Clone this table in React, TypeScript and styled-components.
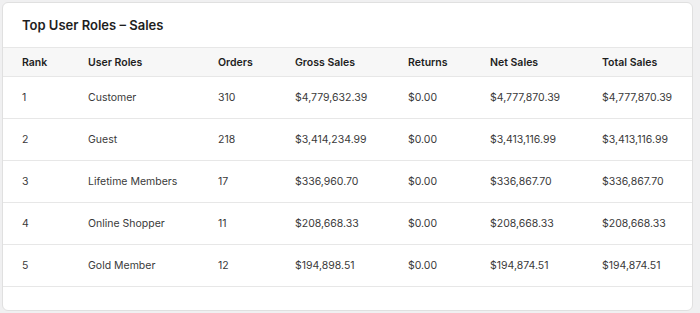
import { createGlobalStyle, styled } from "styled-components";

const GlobalStyle = createGlobalStyle`
  html, body {
    margin: 0;
    padding: 0;
    background: #f0f0f1;
  }
  body {
    font-family: Inter, "Liberation Sans", sans-serif;
    -webkit-font-smoothing: antialiased;
  }
`;

const Page = styled.div`
  padding: 2px 7px 2px 2px;
`;

const Card = styled.section`
  box-sizing: border-box;
  height: 309px;
  background: #fff;
  border: 1px solid #e0e0e0;
  border-radius: 6px;
  overflow: hidden;
`;

const Title = styled.h2`
  margin: 0;
  height: 44px;
  display: flex;
  align-items: center;
  padding-left: 19px;
  font-size: 13px;
  font-weight: 600;
  color: #1e1e1e;
`;

const Row = styled.div<{ $head?: boolean }>`
  display: grid;
  grid-template-columns: 66px 130px 77px 113px 82px 112px 1fr;
  padding-left: 19px;
  align-items: center;
  height: ${(p) => (p.$head ? "28px" : "41px")};
  background: ${(p) => (p.$head ? "#f7f7f7" : "#fff")};
  border-top: ${(p) => (p.$head ? "1px solid #e7e7e7" : "none")};
  border-bottom: 1px solid #e7e7e7;
  font-size: 10.5px;
  font-weight: ${(p) => (p.$head ? 600 : 400)};
  color: ${(p) => (p.$head ? "#1e1e1e" : "#3a3a3a")};
`;

const Cell = styled.div`
  white-space: nowrap;
`;

const columns = [
  "Rank",
  "User Roles",
  "Orders",
  "Gross Sales",
  "Returns",
  "Net Sales",
  "Total Sales",
];

const rows = [
  ["1", "Customer", "310", "$4,779,632.39", "$0.00", "$4,777,870.39", "$4,777,870.39"],
  ["2", "Guest", "218", "$3,414,234.99", "$0.00", "$3,413,116.99", "$3,413,116.99"],
  ["3", "Lifetime Members", "17", "$336,960.70", "$0.00", "$336,867.70", "$336,867.70"],
  ["4", "Online Shopper", "11", "$208,668.33", "$0.00", "$208,668.33", "$208,668.33"],
  ["5", "Gold Member", "12", "$194,898.51", "$0.00", "$194,874.51", "$194,874.51"],
];

export default function App() {
  return (
    <Page>
      <GlobalStyle />
      <Card>
        <Title>Top User Roles – Sales</Title>
        <Row $head>
          {columns.map((c) => (
            <Cell key={c}>{c}</Cell>
          ))}
        </Row>
        {rows.map((r) => (
          <Row key={r[0]}>
            {r.map((v, i) => (
              <Cell key={i}>{v}</Cell>
            ))}
          </Row>
        ))}
      </Card>
    </Page>
  );
}
